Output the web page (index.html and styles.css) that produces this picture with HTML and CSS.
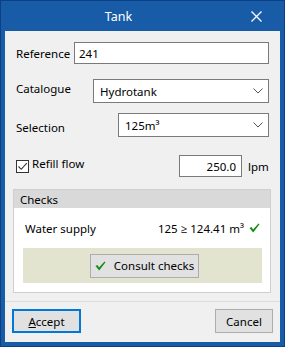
FILE: index.html
```html
<!DOCTYPE html>
<html lang="en">
<head>
    <meta charset="UTF-8">
    <title>Tank</title>
    <link rel="stylesheet" href="styles.css">
</head>
<body>
    <div class="window">
        <div class="titlebar">
            <span class="title">Tank</span>
            <span class="close">
                <svg width="11" height="11" viewBox="0 0 11 11">
                    <path d="M0.5 0.5 L10.5 10.5 M10.5 0.5 L0.5 10.5" stroke="#fff" stroke-width="1.3" fill="none"/>
                </svg>
            </span>
        </div>
        <div class="client">
            <div class="row row-ref">
                <label class="lbl lbl-ref">Reference</label>
                <div class="field">241</div>
            </div>
            <div class="row row-cat">
                <label class="lbl lbl-cat">Catalogue</label>
                <div class="combo">
                    <span>Hydrotank</span>
                    <svg class="chev" width="10" height="6" viewBox="0 0 10 6"><path d="M0.5 0.5 L5 5 L9.5 0.5" stroke="#555" fill="none"/></svg>
                </div>
            </div>
            <div class="row row-sel">
                <label class="lbl lbl-sel">Selection</label>
                <div class="combo">
                    <span>125m³</span>
                    <svg class="chev" width="10" height="6" viewBox="0 0 10 6"><path d="M0.5 0.5 L5 5 L9.5 0.5" stroke="#555" fill="none"/></svg>
                </div>
            </div>
            <div class="row row-flow">
                <span class="checkbox">
                    <svg width="11" height="11" viewBox="0 0 11 11"><path d="M1.5 5.5 L4.2 8.3 L9.8 2.2" stroke="#333" stroke-width="1.1" fill="none"/></svg>
                </span>
                <span class="chk-label">Refill flow</span>
                <div class="field field-num">250.0</div>
                <span class="unit">lpm</span>
            </div>
            <div class="group">
                <div class="group-head">Checks</div>
                <div class="group-body">
                    <div class="check-row">
                        <span>Water supply</span>
                        <span class="value">125 ≥ 124.41 m³
                            <svg class="tick" width="11" height="10" viewBox="0 0 11 10"><path d="M0.5 5 L2.5 4 L4 6.5 L9.5 0.5 L10.5 1.3 L4.2 9.5 Z" fill="#118c11"/></svg>
                        </span>
                    </div>
                    <div class="panel">
                        <button class="btn btn-consult">
                            <svg class="tick" width="11" height="10" viewBox="0 0 11 10"><path d="M0.5 5 L2.5 4 L4 6.5 L9.5 0.5 L10.5 1.3 L4.2 9.5 Z" fill="#118c11"/></svg>
                            Consult checks
                        </button>
                    </div>
                </div>
            </div>
            <div class="footer">
                <button class="btn btn-accept"><u>A</u>ccept</button>
                <button class="btn btn-cancel">Cancel</button>
            </div>
        </div>
    </div>
</body>
</html>
```

FILE: styles.css
```css
body {
    margin: 0;
    font-family: "Noto Sans", "Open Sans", sans-serif;
    font-size: 11.5px;
    color: #000;
}

.window {
    width: 285px;
    height: 347px;
    box-sizing: border-box;
    border: 1px solid #0d3f87;
    background-color: #185ca8;
    display: flex;
    flex-direction: column;
}

.titlebar {
    height: 30px;
    display: flex;
    align-items: center;
    color: white;
}

.title {
    flex: 1;
    text-align: center;
    font-size: 12.5px;
}

.close {
    width: 40px;
    margin-right: 8px;
    display: flex;
    justify-content: center;
    align-items: center;
}

.client {
    flex: 1;
    margin: 0 4px 4px 4px;
    background-color: #f0f0f0;
    display: flex;
    flex-direction: column;
    padding: 11px 11px 0 11px;
}

.row {
    display: flex;
    align-items: center;
}

.lbl-ref { width: 58px; }
.lbl-cat { width: 77px; position: relative; top: -3px; }
.lbl-sel { width: 102px; position: relative; top: 2px; }

.row-cat { margin-top: 15px; }
.row-sel { margin-top: 10px; }
.row-flow { margin-top: 18px; }

.field {
    flex: 1;
    height: 22px;
    box-sizing: border-box;
    border: 1px solid #7a7a7a;
    background-color: white;
    padding: 0 4px;
    display: flex;
    align-items: center;
}

.combo {
    flex: 1;
    height: 24px;
    box-sizing: border-box;
    border: 1px solid #7a7a7a;
    background-color: white;
    padding: 0 5px 0 6px;
    display: flex;
    align-items: center;
    justify-content: space-between;
}

.checkbox {
    width: 13px;
    height: 13px;
    box-sizing: border-box;
    border: 1px solid #333;
    background-color: white;
    display: flex;
    align-items: center;
    justify-content: center;
}

.chk-label {
    flex: 1;
    margin-left: 3px;
    position: relative;
    top: -3px;
}

.field-num {
    flex: none;
    width: 63px;
    justify-content: flex-end;
    padding-right: 5px;
}

.unit {
    margin-left: 6px;
    width: 21px;
}

.group {
    margin: 12px -2px 0 -3px;
    border: 1px solid #cfcfcf;
    background-color: white;
    height: 104px;
    box-sizing: border-box;
}

.group-head {
    height: 18px;
    background-color: #d9d9d9;
    padding-left: 6px;
    display: flex;
    align-items: center;
}

.group-body {
    padding: 0 8px 0 9px;
}

.check-row {
    display: flex;
    justify-content: space-between;
    align-items: center;
    height: 40px;
    padding: 0 2px 0 2px;
}

.value {
    display: flex;
    align-items: center;
    gap: 5px;
}

.panel {
    height: 35px;
    background-color: #e3e4cf;
    display: flex;
    justify-content: center;
    align-items: center;
}

.btn {
    font-family: inherit;
    font-size: inherit;
    color: #000;
    height: 24px;
    box-sizing: border-box;
    border: 1px solid #adadad;
    background-color: #e1e1e1;
    padding: 0;
    margin: 0;
}

.btn-consult {
    width: 109px;
    display: flex;
    align-items: center;
    justify-content: center;
    gap: 8px;
    position: relative;
    left: 2px;
}

.footer {
    margin: 8px -11px 0 -11px;
    border-top: 1px solid #dcdcdc;
    padding: 7px 7px 0 7px;
    display: flex;
    justify-content: space-between;
}

.btn-accept {
    width: 69px;
    border: 2px solid #0078d7;
}

.btn-cancel {
    width: 58px;
}
```
